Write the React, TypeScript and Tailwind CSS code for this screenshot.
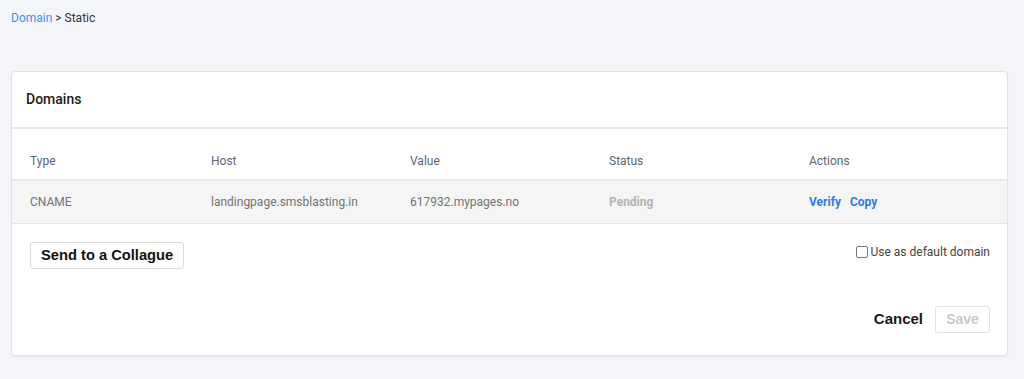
const columns = ['Type', 'Host', 'Value', 'Status', 'Actions']

export default function App() {
  return (
    <div className="min-h-[379px] w-[1024px] bg-[#f3f5f8] font-['Roboto',sans-serif]">
      <div className="px-[11px] pt-[11px] text-[12px] leading-[14px] text-[#333]">
        <span className="text-[#4a8cf0]">Domain</span> &gt; Static
      </div>

      <div className="ml-[11px] mt-[46px] w-[997px] rounded-[4px] border border-[#dfe2e6] bg-white shadow-[0_1px_2px_rgba(0,0,0,0.06)]">
        <div className="flex h-[57px] items-center border-b-2 border-[#e6e8eb] px-[14px]">
          <h2 className="text-[14px] font-medium text-[#1c1c1c]">Domains</h2>
        </div>

        <table className="w-full table-fixed text-left text-[12px]">
          <colgroup>
            <col className="w-[181px]" />
            <col className="w-[199px]" />
            <col className="w-[199px]" />
            <col className="w-[200px]" />
            <col />
          </colgroup>
          <thead>
            <tr className="h-[51px] border-b-2 border-[#e6e8eb]">
              {columns.map(c => (
                <th key={c} className="px-[18px] pt-[14px] font-normal text-[#5b6574]">
                  {c}
                </th>
              ))}
            </tr>
          </thead>
          <tbody>
            <tr className="h-[43px] border-b border-[#e3e5e8] bg-[#f5f5f5] text-[#737373]">
              <td className="px-[18px]">CNAME</td>
              <td className="px-[18px]">landingpage.smsblasting.in</td>
              <td className="px-[18px]">617932.mypages.no</td>
              <td className="px-[18px] font-bold text-[#b4b4b4]">Pending</td>
              <td className="px-[18px] text-[12px] font-bold text-[#2b7de9]">
                <span className="mr-[9px]">Verify</span>
                <span>Copy</span>
              </td>
            </tr>
          </tbody>
        </table>

        <div className="flex items-start justify-between pl-[18px] pr-[17px] pt-[18px]">
          <button className="h-[27px] rounded-[3px] border border-[#dcdcdc] bg-white px-[10px] font-['Liberation_Sans',sans-serif] text-[14.7px] font-bold text-[#111]">
            Send to a Collague
          </button>
          <label className="mt-[1px] flex items-center gap-[3px] text-[12px] text-[#444]">
            <span className="inline-block h-[12px] w-[12px] rounded-[2px] border border-[#767676] bg-white" />
            Use as default domain
          </label>
        </div>

        <div className="flex items-center justify-end gap-[12px] pb-[22px] pr-[17px] pt-[37px]">
          <button className="font-['Liberation_Sans',sans-serif] text-[15px] font-bold text-[#1a1a1a]">
            Cancel
          </button>
          <button className="h-[27px] w-[55px] rounded-[3px] border border-[#e2e2e2] bg-white font-['Liberation_Sans',sans-serif] text-[14px] font-bold text-[#c8c8c8]">
            Save
          </button>
        </div>
      </div>
    </div>
  )
}
